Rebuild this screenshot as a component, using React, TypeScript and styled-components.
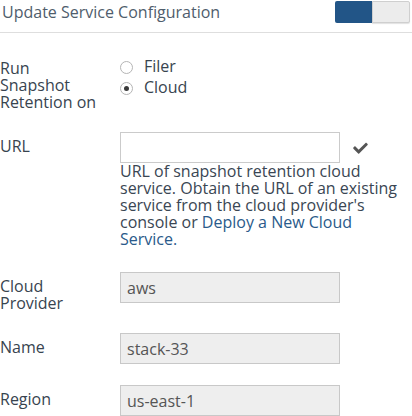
import React from "react";
import styled, { createGlobalStyle } from "styled-components";

const Global = createGlobalStyle`
  html, body { margin: 0; padding: 0; background: #fff; }
  body { font-family: "Open Sans", "Noto Sans", sans-serif; width: 412px; }
`;

const Page = styled.div`
  width: 412px;
  box-sizing: border-box;
`;

const Header = styled.div`
  display: flex;
  justify-content: space-between;
  align-items: flex-start;
  height: 33px;
  box-sizing: border-box;
  border-bottom: 1px solid #dedede;
`;

const Title = styled.div`
  margin: 1px 0 0 2px;
  font-size: 16px;
  line-height: 22px;
  color: #4f5d6c;
`;

const Toggle = styled.div`
  display: flex;
  margin: 1px 2px 0 0;
  height: 22px;
`;

const ToggleOn = styled.div`
  width: 37px;
  background: #225587;
  border-radius: 2px 0 0 2px;
`;

const ToggleOff = styled.div`
  width: 36px;
  background: #ececec;
  border: 1px solid #cfcfcf;
  border-radius: 0 2px 2px 0;
  box-shadow: 0 1px 1px rgba(0, 0, 0, 0.12);
`;

const Form = styled.div`
  display: flex;
  flex-direction: column;
  gap: 21px;
  padding-top: 19px;
`;

const Row = styled.div<{ $extra?: number }>`
  display: grid;
  grid-template-columns: 100px 1fr;
  column-gap: 20px;
  align-items: start;
  margin-bottom: ${(p) => p.$extra ?? 0}px;
`;

const Label = styled.div<{ $pad: number }>`
  padding-top: ${(p) => p.$pad}px;
  font-size: 16px;
  line-height: 17px;
  color: #38444f;
`;

const RadioGroup = styled.div`
  display: flex;
  flex-direction: column;
  margin-top: 3px;
`;

const RadioItem = styled.label`
  display: flex;
  align-items: center;
  gap: 11px;
  height: 21px;
  font-size: 16px;
  color: #38444f;
`;

const RadioCircle = styled.span<{ $checked?: boolean }>`
  position: relative;
  width: 13px;
  height: 13px;
  box-sizing: border-box;
  border: 1px solid #b5b5b5;
  border-radius: 50%;
  margin-top: 3px;
  background: #fff;
  &::after {
    content: "";
    display: ${(p) => (p.$checked ? "block" : "none")};
    position: absolute;
    left: 3px;
    top: 3px;
    width: 5px;
    height: 5px;
    border-radius: 50%;
    background: #3a3a3a;
  }
`;

const Field = styled.div`
  display: flex;
  flex-direction: column;
`;

const InputLine = styled.div`
  display: flex;
  align-items: center;
  gap: 13px;
`;

const TextBox = styled.div<{ $disabled?: boolean }>`
  width: 220px;
  height: 31px;
  box-sizing: border-box;
  border: 1px solid ${(p) => (p.$disabled ? "#c8c8c8" : "#cbcbcb")};
  background: ${(p) => (p.$disabled ? "#eeeeee" : "#ffffff")};
  padding: 0 6px;
  display: flex;
  align-items: center;
  font-size: 16px;
  color: #555;
`;

const Help = styled.div`
  max-width: 282px;
  font-size: 16px;
  line-height: 17px;
  color: #3a4653;
`;

const Link = styled.a`
  color: #2a5a8a;
  text-decoration: none;
`;

const Check = () => (
  <svg width="15" height="12" viewBox="0 0 512 420" aria-hidden>
    <path
      fill="#555"
      transform="translate(0,-40)"
      d="M173.898 439.404l-166.4-166.4c-9.997-9.997-9.997-26.206 0-36.204l36.203-36.204c9.997-9.998 26.207-9.998 36.204 0L192 312.69 432.095 72.596c9.997-9.997 26.207-9.997 36.204 0l36.203 36.204c9.997 9.997 9.997 26.206 0 36.204l-294.4 294.401c-9.998 9.997-26.207 9.997-36.204-.001z"
    />
  </svg>
);

export default function App() {
  return (
    <Page>
      <Global />
      <Header>
        <Title>Update Service Configuration</Title>
        <Toggle>
          <ToggleOn />
          <ToggleOff />
        </Toggle>
      </Header>
      <Form>
        <Row>
          <Label $pad={8}>Run Snapshot Retention on</Label>
          <RadioGroup>
            <RadioItem>
              <RadioCircle />
              Filer
            </RadioItem>
            <RadioItem>
              <RadioCircle $checked />
              Cloud
            </RadioItem>
          </RadioGroup>
        </Row>
        <Row $extra={3}>
          <Label $pad={6}>URL</Label>
          <Field>
            <InputLine>
              <TextBox />
              <Check />
            </InputLine>
            <Help>
              URL of snapshot retention cloud service. Obtain the URL of an
              existing service from the cloud provider's console or{" "}
              <Link href="#">Deploy a New Cloud Service.</Link>
            </Help>
          </Field>
        </Row>
        <Row>
          <Label $pad={6}>Cloud Provider</Label>
          <TextBox $disabled>aws</TextBox>
        </Row>
        <Row>
          <Label $pad={6}>Name</Label>
          <TextBox $disabled>stack-33</TextBox>
        </Row>
        <Row>
          <Label $pad={6}>Region</Label>
          <TextBox $disabled>us-east-1</TextBox>
        </Row>
      </Form>
    </Page>
  );
}
